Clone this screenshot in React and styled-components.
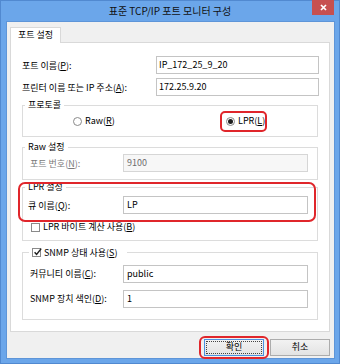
import React from "react";
import styled, { createGlobalStyle } from "styled-components";

const GlobalStyle = createGlobalStyle`
  html, body { margin: 0; padding: 0; background: #6ba6ea; }
  body {
    font-family: "Noto Sans CJK KR", "Noto Sans", sans-serif;
    font-size: 9px;
    color: #000;
  }
  * { box-sizing: border-box; }
`;

const Window = styled.div`
  width: 340px;
  height: 364px;
  background: #6ba6ea;
  box-shadow: inset 0 0 0 1px #5189d0;
  display: flex;
  flex-direction: column;
`;

const TitleBar = styled.div`
  height: 22px;
  display: grid;
  grid-template-columns: 1fr auto 1fr;
  align-items: start;
`;

const Title = styled.div`
  grid-column: 2;
  font-size: 10px;
  line-height: 21px;
  color: #111;
`;

const CloseBtn = styled.div`
  grid-column: 3;
  justify-self: end;
  margin-right: 6px;
  width: 22px;
  height: 15px;
  background: #c75050;
  display: flex;
  align-items: center;
  justify-content: center;
`;

const Client = styled.div`
  margin-left: 7px;
  width: 327px;
  height: 336px;
  background: #f0f0f0;
  box-shadow: 0 0 0 1px #5e95d8;
  padding: 5px 4px 0 3px;
  display: flex;
  flex-direction: column;
`;

const TabStrip = styled.div`
  display: flex;
`;

const Tab = styled.div`
  position: relative;
  z-index: 1;
  height: 16px;
  padding: 0 7px;
  margin-bottom: -1px;
  border: 1px solid #d9d9d9;
  border-bottom: none;
  background: #fff;
  line-height: 14px;
`;

const Panel = styled.div`
  width: 320px;
  border: 1px solid #d9d9d9;
  background: #fff;
  padding: 13px 10px 11px 11px;
  display: flex;
  flex-direction: column;
`;

const FieldRow = styled.div`
  display: grid;
  grid-template-columns: ${(p) => p.$labelWidth}px 1fr;
  align-items: center;
  margin-top: ${(p) => p.$mt || 0}px;
  color: ${(p) => (p.$disabled ? "#7a7a7a" : "#000")};
`;

const Input = styled.div`
  height: 18px;
  border: 1px solid ${(p) => (p.$disabled ? "#d6d6d6" : "#c4c4c4")};
  background: ${(p) => (p.$disabled ? "#f7f7f7" : "#fff")};
  color: ${(p) => (p.$disabled ? "#6d6d6d" : "#000")};
  padding: 0 ${(p) => p.$pl || 3}px;
  line-height: 16px;
`;

const Group = styled.fieldset`
  margin: ${(p) => p.$mt}px 1px 0 0;
  padding: 0;
  border: 1px solid #dcdcdc;
  min-width: 0;
`;

const Legend = styled.legend`
  position: relative;
  margin-left: ${(p) => p.$ml || 2}px;
  padding: 0 ${(p) => p.$pr || 3}px 0 3px;
  height: 12px;
  line-height: 12px;
  display: flex;
  align-items: center;
`;

const GroupBody = styled.div`
  padding: ${(p) => p.$pad};
`;

const RadioRow = styled.div`
  display: grid;
  grid-template-columns: 153px auto;
  align-items: center;
  height: 14px;
`;

const Choice = styled.label`
  position: relative;
  display: inline-flex;
  align-items: center;
  gap: 3px;
  line-height: 12px;
  margin-top: ${(p) => p.$mt || 0}px;
  margin-left: ${(p) => p.$ml || 0}px;
`;

const RadioDot = styled.span`
  width: 9px;
  height: 9px;
  border-radius: 50%;
  border: 1px solid #8a8a8a;
  background: #fff;
  display: flex;
  align-items: center;
  justify-content: center;
  &::after {
    content: "";
    width: 5px;
    height: 5px;
    border-radius: 50%;
    background: ${(p) => (p.$checked ? "#1e1e1e" : "transparent")};
  }
`;

const CheckBox = styled.span`
  width: 9px;
  height: 9px;
  border: 1px solid #8a8a8a;
  background: #fff;
  position: relative;
  svg {
    position: absolute;
    left: 0;
    top: -2px;
  }
`;

const Highlight = styled.span`
  position: absolute;
  left: ${(p) => p.$left}px;
  top: ${(p) => p.$top}px;
  width: ${(p) => p.$w}px;
  height: ${(p) => p.$h}px;
  border: 2px solid #e0262b;
  border-radius: ${(p) => p.$r || 5}px;
  pointer-events: none;
`;

const ButtonBar = styled.div`
  margin-top: 7px;
  display: flex;
  justify-content: flex-end;
  gap: 6px;
`;

const Button = styled.div`
  position: relative;
  width: 60px;
  height: 17px;
  border: 1px solid ${(p) => (p.$default ? "#4a90e2" : "#acacac")};
  background: linear-gradient(#f2f2f2, #e3e3e3);
  display: flex;
  align-items: center;
  justify-content: center;
  line-height: 12px;
  &::before {
    content: "";
    display: ${(p) => (p.$default ? "block" : "none")};
    position: absolute;
    inset: 1px;
    border: 1px dotted #444;
  }
`;

const Mn = styled.u`
  text-decoration: underline;
`;

const Check = () => (
  <svg width="10" height="10" viewBox="0 0 10 10">
    <path d="M1.6 5.2 L3.6 7.4 L8.2 1.6" fill="none" stroke="#222" strokeWidth="1.5" />
  </svg>
);

export default function App() {
  return (
    <>
      <GlobalStyle />
      <Window>
        <TitleBar>
          <Title>표준 TCP/IP 포트 모니터 구성</Title>
          <CloseBtn>
            <svg width="7" height="7" viewBox="0 0 7 7">
              <path d="M1 1 L6 6 M6 1 L1 6" stroke="#fff" strokeWidth="1.7" />
            </svg>
          </CloseBtn>
        </TitleBar>
        <Client>
          <TabStrip>
            <Tab>포트 설정</Tab>
          </TabStrip>
          <Panel>
            <FieldRow $labelWidth={134}>
              <span>포트 이름(<Mn>P</Mn>):</span>
              <Input $pl={2}>IP_172_25_9_20</Input>
            </FieldRow>
            <FieldRow $labelWidth={134} $mt={4}>
              <span>프린터 이름 또는 IP 주소(<Mn>A</Mn>):</span>
              <Input $pl={2}>172.25.9.20</Input>
            </FieldRow>

            <Group $mt={3}>
              <Legend>프로토콜</Legend>
              <GroupBody $pad="3px 0 8px 50px">
                <RadioRow>
                  <Choice>
                    <RadioDot />
                    <span>Raw(<Mn>R</Mn>)</span>
                  </Choice>
                  <Choice>
                    <RadioDot $checked />
                    <span>LPR(<Mn>L</Mn>)</span>
                    <Highlight $left={-6} $top={-4} $w={47} $h={21} />
                  </Choice>
                </RadioRow>
              </GroupBody>
            </Group>

            <Group $mt={4}>
              <Legend>Raw 설정</Legend>
              <GroupBody $pad="1px 9px 7px 7px">
                <FieldRow $labelWidth={93} $disabled>
                  <span>포트 번호(<Mn>N</Mn>):</span>
                  <Input $disabled>9100</Input>
                </FieldRow>
              </GroupBody>
            </Group>

            <Group $mt={1}>
              <Legend>
                LPR 설정
                <Highlight $left={-7} $top={1} $w={298} $h={40} $r={7} />
              </Legend>
              <GroupBody $pad="3px 9px 5px 5px">
                <FieldRow $labelWidth={95}>
                  <span>큐 이름(<Mn>Q</Mn>):</span>
                  <Input>LP</Input>
                </FieldRow>
                <Choice $mt={7} $ml={3}>
                  <CheckBox />
                  <span>LPR 바이트 계산 사용(<Mn>B</Mn>)</span>
                </Choice>
              </GroupBody>
            </Group>

            <Group $mt={6}>
              <Legend $ml={6} $pr={9}>
                <Choice>
                  <CheckBox>
                    <Check />
                  </CheckBox>
                  <span>SNMP 상태 사용(<Mn>S</Mn>)</span>
                </Choice>
              </Legend>
              <GroupBody $pad="6px 9px 11px 7px">
                <FieldRow $labelWidth={93}>
                  <span>커뮤니티 이름(<Mn>C</Mn>):</span>
                  <Input>public</Input>
                </FieldRow>
                <FieldRow $labelWidth={93} $mt={7}>
                  <span>SNMP 장치 색인(<Mn>D</Mn>):</span>
                  <Input>1</Input>
                </FieldRow>
              </GroupBody>
            </Group>
          </Panel>
          <ButtonBar>
            <Button $default>
              확인
              <Highlight $left={-6} $top={-4} $w={70} $h={23} $r={6} />
            </Button>
            <Button>취소</Button>
          </ButtonBar>
        </Client>
      </Window>
    </>
  );
}
